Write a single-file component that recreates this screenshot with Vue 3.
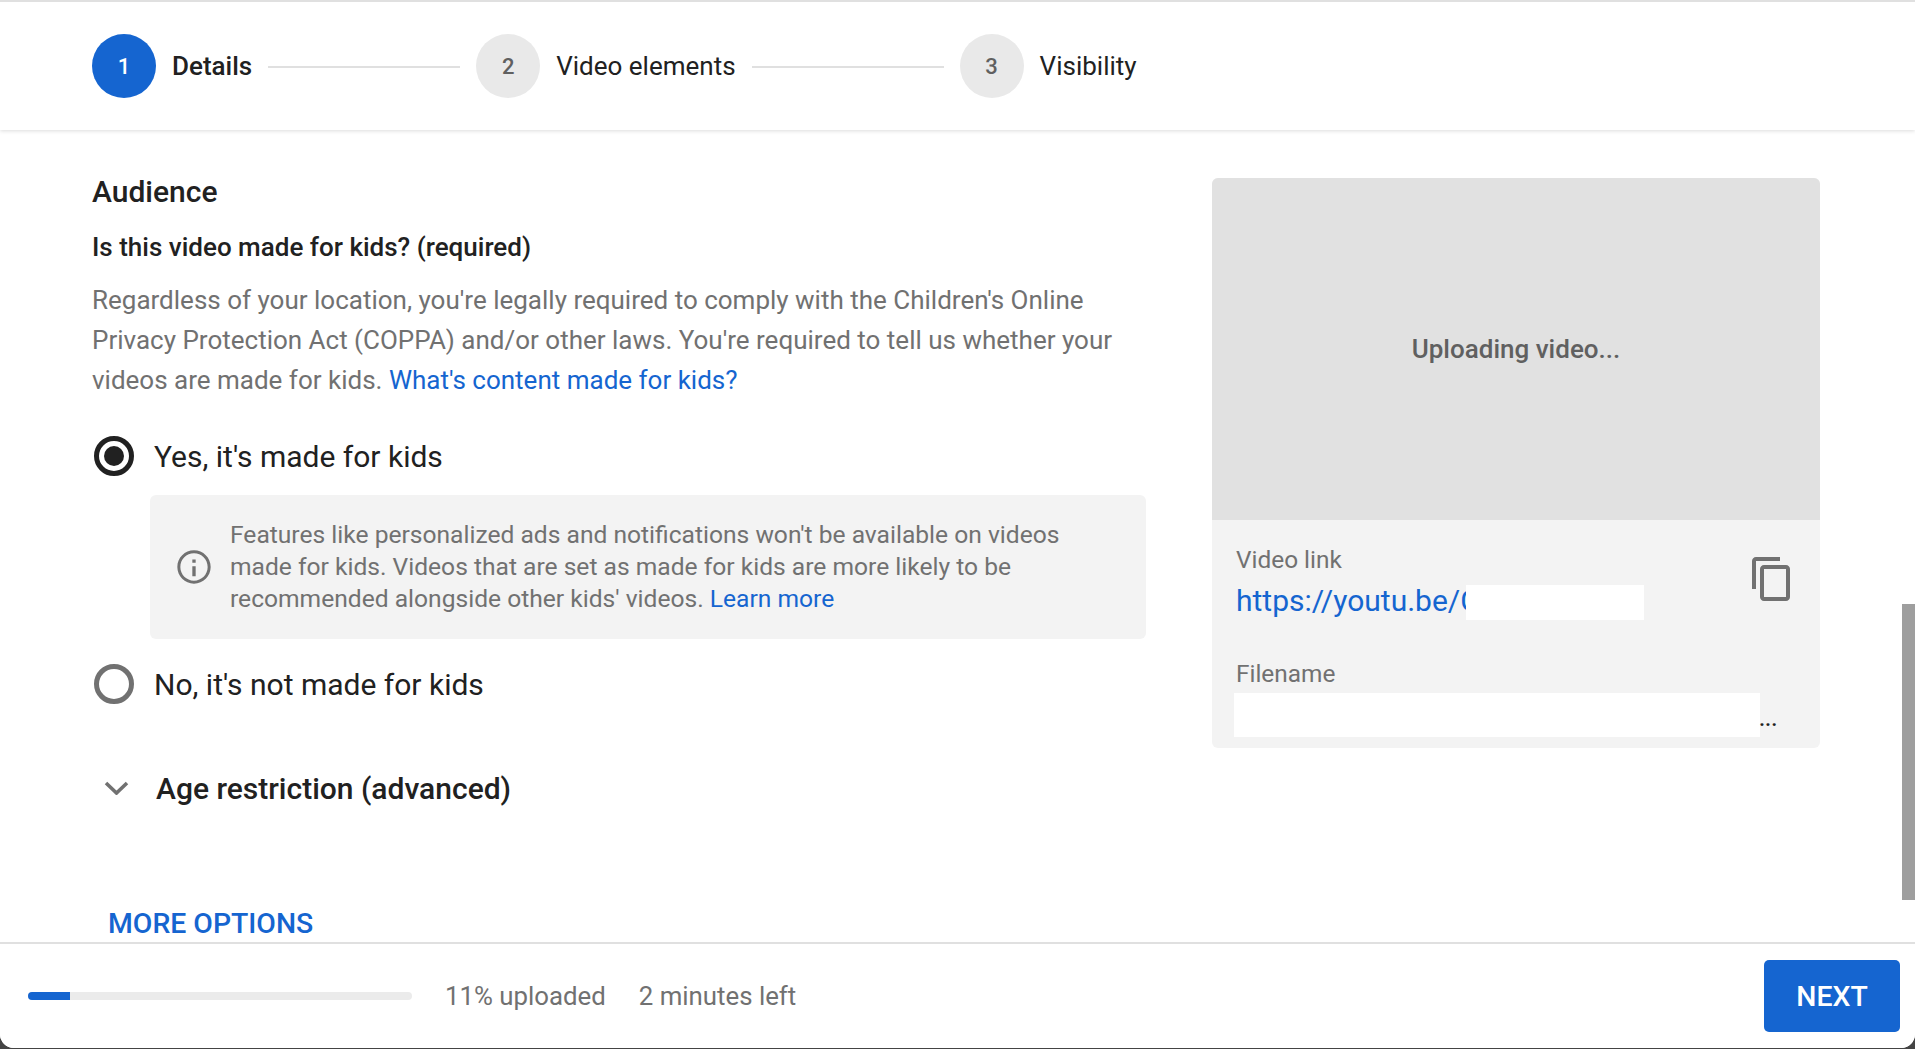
<script setup>
const steps = [
  { n: 1, label: 'Details', active: true },
  { n: 2, label: 'Video elements', active: false },
  { n: 3, label: 'Visibility', active: false }
]
</script>

<template>
  <div class="frame">
    <div class="dialog">
      <header class="stepper">
        <template v-for="(s, i) in steps" :key="s.n">
          <div class="circle" :class="{ on: s.active }">{{ s.n }}</div>
          <div class="label" :class="{ on: s.active }">{{ s.label }}</div>
          <div v-if="i < steps.length - 1" class="line"></div>
        </template>
      </header>

      <main class="content">
        <div class="left">
          <h2 class="title">Audience</h2>
          <h3 class="question">Is this video made for kids? (required)</h3>
          <p class="desc">
            Regardless of your location, you're legally required to comply with the Children's Online<br />
            Privacy Protection Act (COPPA) and/or other laws. You're required to tell us whether your<br />
            videos are made for kids. <a class="link">What's content made for kids?</a>
          </p>

          <div class="radio-row first">
            <span class="radio checked"><span class="dot"></span></span>
            <span>Yes, it's made for kids</span>
          </div>

          <div class="notice">
            <svg class="info" viewBox="0 0 24 24" width="40" height="40">
              <path fill="#717171" d="M11 7.5h2v2h-2zm0 4h2v6h-2z" />
              <path fill="#717171" d="M12 2C6.48 2 2 6.48 2 12s4.48 10 10 10 10-4.48 10-10S17.52 2 12 2zm0 18.2c-4.52 0-8.2-3.68-8.2-8.2S7.48 3.8 12 3.8s8.2 3.68 8.2 8.2-3.68 8.2-8.2 8.2z" />
            </svg>
            <p class="notice-text">
              Features like personalized ads and notifications won't be available on videos<br />
              made for kids. Videos that are set as made for kids are more likely to be<br />
              recommended alongside other kids' videos. <a class="link">Learn more</a>
            </p>
          </div>

          <div class="radio-row second">
            <span class="radio"></span>
            <span>No, it's not made for kids</span>
          </div>

          <div class="age">
            <svg class="chev" viewBox="0 0 25 14" width="25" height="14">
              <path d="M2 2l10.5 10L23 2" fill="none" stroke="#717171" stroke-width="3.6" />
            </svg>
            <span>Age restriction (advanced)</span>
          </div>

          <div class="more">MORE OPTIONS</div>
        </div>

        <aside class="card">
          <div class="thumb">Uploading video...</div>
          <div class="meta">
            <div class="meta-top">
              <div>
                <div class="meta-label">Video link</div>
                <div class="url-row">
                  <a class="url">https://youtu.be/C</a><span class="mask-url"></span>
                </div>
              </div>
              <svg class="copy" viewBox="0 0 24 24" width="48" height="48">
                <path fill="#717171" d="M16 1H4c-1.1 0-2 .9-2 2v14h2V3h12V1zm3 4H8c-1.1 0-2 .9-2 2v14c0 1.1.9 2 2 2h11c1.1 0 2-.9 2-2V7c0-1.1-.9-2-2-2zm0 16H8V7h11v14z" />
              </svg>
            </div>
            <div class="meta-label file-label">Filename</div>
            <div class="file-row"><span class="mask-file"></span><span class="dots">...</span></div>
          </div>
        </aside>

        <div class="scroll-thumb"></div>
      </main>

      <footer class="footer">
        <div class="track"><div class="fill" :style="{ width: '11%' }"></div></div>
        <span class="status">11% uploaded</span>
        <span class="status">2 minutes left</span>
        <button class="next">NEXT</button>
      </footer>
    </div>
  </div>
</template>

<style>
html, body { margin: 0; padding: 0; overflow: hidden; }
</style>

<style scoped>
.frame {
  width: 1915px;
  height: 1049px;
  background: #444;
  font-family: Roboto, "Liberation Sans", sans-serif;
  color: #212121;
}
.dialog {
  height: 1048px;
  box-sizing: border-box;
  background: #fff;
  border-top: 2px solid #e0e0e0;
  border-radius: 0 0 14px 14px;
  display: flex;
  flex-direction: column;
  overflow: hidden;
}
.stepper {
  height: 128px;
  flex: none;
  display: flex;
  align-items: center;
  padding: 0 0 0 92px;
  box-sizing: border-box;
  box-shadow: 0 1px 4px rgba(0, 0, 0, 0.14);
  position: relative;
  z-index: 1;
}
.circle {
  width: 64px;
  height: 64px;
  border-radius: 50%;
  background: #e9e9e9;
  color: #606060;
  font-size: 22px;
  font-weight: 500;
  display: flex;
  align-items: center;
  justify-content: center;
  flex: none;
}
.circle.on { background: #1565d0; color: #fff; }
.label {
  margin-left: 16px;
  font-size: 26px;
  color: #212121;
  white-space: nowrap;
}
.label.on { font-weight: 500; }
.line {
  width: 192px;
  height: 2px;
  background: #e0e0e0;
  margin: 2px 16px 0;
  flex: none;
}
.content {
  flex: 1;
  position: relative;
  display: flex;
  align-items: flex-start;
  padding: 48px 0 0 92px;
  overflow: hidden;
  min-height: 0;
}
.left { width: 1054px; flex: none; }
.title {
  margin: -1px 0 0;
  font-size: 30px;
  line-height: 30px;
  font-weight: 500;
  color: #212121;
}
.question {
  margin: 25px 0 0;
  font-size: 26px;
  line-height: 30px;
  font-weight: 500;
  color: #212121;
}
.desc {
  margin: 18px 0 0;
  font-size: 26px;
  line-height: 40px;
  color: #717171;
  white-space: nowrap;
}
.link { color: #1565d0; }
.radio-row {
  display: flex;
  align-items: center;
  gap: 20px;
  font-size: 30px;
  height: 40px;
  color: #212121;
  padding-left: 2px;
}
.radio-row.first { margin-top: 36px; }
.radio-row.second { margin-top: 25px; }
.radio {
  width: 40px;
  height: 40px;
  box-sizing: border-box;
  border-radius: 50%;
  border: 5px solid #717171;
  display: flex;
  align-items: center;
  justify-content: center;
  flex: none;
}
.radio.checked { border-color: #212121; }
.dot { width: 20px; height: 20px; border-radius: 50%; background: #212121; }
.notice {
  margin: 19px 0 0 58px;
  height: 144px;
  box-sizing: border-box;
  background: #f3f3f3;
  border-radius: 6px;
  display: flex;
  align-items: center;
  padding-left: 24px;
}
.info { flex: none; }
.notice-text {
  margin: 0 0 0 16px;
  font-size: 24.6px;
  line-height: 32px;
  color: #717171;
  white-space: nowrap;
}
.age {
  margin-top: 64px;
  display: flex;
  align-items: center;
  font-size: 30px;
  font-weight: 500;
  height: 40px;
  color: #212121;
}
.chev { margin-left: 12px; margin-right: 27px; flex: none; }
.more {
  margin: 101px 0 0 16px;
  font-size: 28.4px;
  font-weight: 500;
  line-height: 30px;
  color: #1565d0;
  white-space: nowrap;
}
.card {
  margin-left: 66px;
  width: 608px;
  height: 570px;
  flex: none;
  background: #f3f3f3;
  border-radius: 6px;
  overflow: hidden;
}
.thumb {
  height: 342px;
  background: #e1e1e1;
  display: flex;
  align-items: center;
  justify-content: center;
  color: #606060;
  font-size: 26px;
  font-weight: 500;
}
.meta { padding: 25px 24px 0; }
.meta-top { display: flex; justify-content: space-between; align-items: flex-start; }
.meta-label { font-size: 24.4px; line-height: 30px; color: #717171; }
.url-row { position: relative; display: flex; align-items: center; height: 35px; margin-top: 8px; }
.url { font-size: 30px; color: #1565d0; white-space: nowrap; }
.mask-url {
  position: absolute;
  left: 230px;
  top: 2px;
  width: 178px;
  height: 35px;
  background: #fff;
}
.copy { margin: 10px 0 0 0; flex: none; }
.file-label { margin-top: 41px; }
.file-row { display: flex; align-items: flex-end; margin-left: -2px; margin-top: 4px; }
.mask-file { width: 526px; height: 44px; background: #fff; display: block; }
.dots { font-size: 22px; line-height: 20px; color: #212121; font-weight: 500; margin: 0 0 8px -1px; }
.scroll-thumb {
  position: absolute;
  right: 0;
  top: 474px;
  width: 13px;
  height: 296px;
  background: #9e9e9e;
}
.footer {
  height: 106px;
  flex: none;
  box-sizing: border-box;
  border-top: 2px solid #e0e0e0;
  display: flex;
  align-items: center;
  padding: 0 15px 0 28px;
  background: #fff;
}
.track {
  width: 384px;
  height: 8px;
  border-radius: 4px;
  background: #ebebeb;
  overflow: hidden;
  flex: none;
}
.fill { height: 100%; background: #1565d0; }
.status { font-size: 25.8px; color: #717171; white-space: nowrap; margin-left: 33px; }
.next {
  margin-left: auto;
  width: 136px;
  height: 72px;
  border: none;
  border-radius: 5px;
  background: #1565d0;
  color: #fff;
  font-family: inherit;
  font-size: 28.4px;
  font-weight: 500;
  padding: 0;
}
</style>
